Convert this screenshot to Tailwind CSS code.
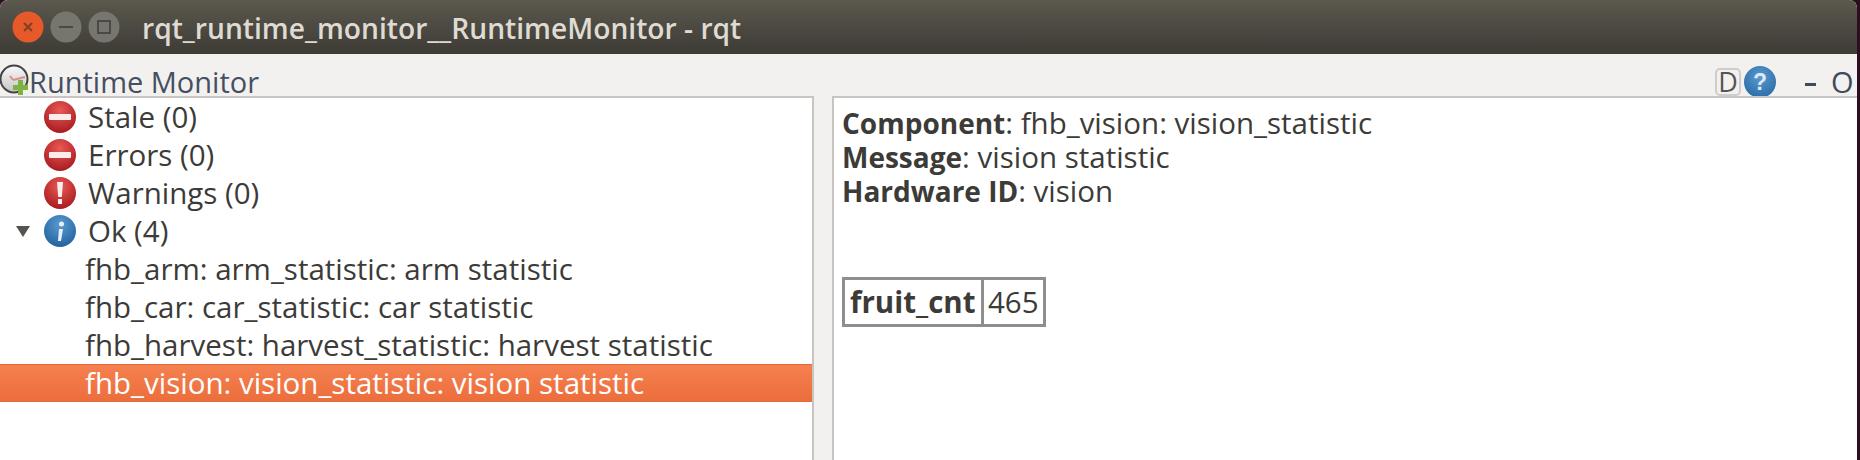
<!DOCTYPE html>
<html lang="en">
<head>
    <meta charset="UTF-8">
    <title>rqt_runtime_monitor__RuntimeMonitor - rqt</title>
    <script src="https://cdn.jsdelivr.net/npm/@tailwindcss/browser@4"></script>
</head>
<body class="bg-[#2c0e20] w-[1860px] h-[460px] overflow-hidden font-['Open_Sans','Noto_Sans',sans-serif] text-[#3c3b37]">
    <div class="w-[1857px] h-[460px] flex flex-col bg-[#f2f1f0] rounded-t-[8px] overflow-hidden">
        <!-- Title bar -->
        <div class="h-[54px] flex items-center bg-gradient-to-b from-[#5b584e] to-[#3d3b35]">
            <div class="flex items-center gap-[6px] pl-[12px]">
                <svg width="32" height="32" viewBox="0 0 32 32">
                    <circle cx="16" cy="16" r="15.5" fill="#e8592a"/>
                    <path d="M12 12l8 8M20 12l-8 8" stroke="#7d4128" stroke-width="2"/>
                </svg>
                <svg width="32" height="32" viewBox="0 0 32 32">
                    <circle cx="16" cy="16" r="15.5" fill="#77766e"/>
                    <path d="M9 16h14" stroke="#4a4943" stroke-width="2"/>
                </svg>
                <svg width="32" height="32" viewBox="0 0 32 32">
                    <circle cx="16" cy="16" r="15.5" fill="#77766e"/>
                    <rect x="10" y="10" width="12" height="12" fill="none" stroke="#4a4943" stroke-width="2"/>
                </svg>
            </div>
            <div class="ml-[22px] pt-[3px] text-[28.2px] font-semibold text-[#dfdbd2] whitespace-nowrap">rqt_runtime_monitor__RuntimeMonitor - rqt</div>
        </div>

        <!-- Plugin toolbar -->
        <div class="h-[42px] flex items-center pt-[13px] text-[29px] leading-none">
            <svg width="29" height="34" viewBox="0 0 29 34" class="-mt-[2px] shrink-0">
                <defs>
                    <linearGradient id="clockGrad" x1="0" y1="0" x2="0" y2="1">
                        <stop offset="0" stop-color="#fafafa"/>
                        <stop offset="1" stop-color="#c4c4c4"/>
                    </linearGradient>
                </defs>
                <circle cx="14" cy="15" r="13.5" fill="url(#clockGrad)" stroke="#444" stroke-width="2"/>
                <path d="M13 16l12-3M13 16l-3-4" stroke="#d9908c" stroke-width="2"/>
                <rect x="18" y="16" width="5" height="15" fill="#7cb342"/>
                <rect x="13" y="21" width="15" height="5" fill="#7cb342"/>
            </svg>
            <span class="text-[#44505f] whitespace-nowrap">Runtime Monitor</span>
            <div class="ml-auto flex items-center">
                <div class="w-[26px] h-[28px] border-2 border-[#cfcdc9] rounded-[5px] flex items-center justify-center text-[27px] text-[#555]">D</div>
                <svg width="32" height="32" viewBox="0 0 32 32" class="ml-[3px]">
                    <defs>
                        <radialGradient id="helpGrad" cx="50%" cy="35%" r="70%">
                            <stop offset="0" stop-color="#5a9ad0"/>
                            <stop offset="1" stop-color="#2a6aa5"/>
                        </radialGradient>
                    </defs>
                    <circle cx="16" cy="16" r="16" fill="url(#helpGrad)"/>
                    <text x="16" y="24" text-anchor="middle" font-size="23" font-weight="700" fill="#dce9f5" font-family="Liberation Sans">?</text>
                </svg>
                <div class="ml-[29px] mt-[6px] w-[11px] h-[3px] bg-[#3f4a5a]"></div>
                <div class="ml-[15px] mr-[4px] w-[22px] text-[29px] text-[#3f4a5a]">O</div>
            </div>
        </div>

        <!-- Panes -->
        <div class="flex-1 flex">
            <!-- Tree -->
            <div class="w-[814px] bg-white border-t-2 border-r-2 border-[#c8c5c1] text-[29.5px]">
                <div class="h-[38px] flex items-center pl-[44px]">
                    <svg width="32" height="32" viewBox="0 0 32 32" class="shrink-0">
                        <defs>
                            <radialGradient id="redGrad" cx="50%" cy="30%" r="75%">
                                <stop offset="0" stop-color="#ea5a55"/>
                                <stop offset="1" stop-color="#a3161c"/>
                            </radialGradient>
                            <radialGradient id="blueGrad" cx="50%" cy="30%" r="75%">
                                <stop offset="0" stop-color="#5a9ad0"/>
                                <stop offset="1" stop-color="#1f5f9c"/>
                            </radialGradient>
                        </defs>
                        <circle cx="16" cy="16" r="16" fill="url(#redGrad)"/>
                        <rect x="5" y="13" width="22" height="6" rx="1" fill="#f7eeee"/>
                    </svg>
                    <span class="ml-[12px]">Stale (0)</span>
                </div>
                <div class="h-[38px] flex items-center pl-[44px]">
                    <svg width="32" height="32" viewBox="0 0 32 32" class="shrink-0">
                        <circle cx="16" cy="16" r="16" fill="url(#redGrad)"/>
                        <rect x="5" y="13" width="22" height="6" rx="1" fill="#f7eeee"/>
                    </svg>
                    <span class="ml-[12px]">Errors (0)</span>
                </div>
                <div class="h-[38px] flex items-center pl-[44px]">
                    <svg width="32" height="32" viewBox="0 0 32 32" class="shrink-0">
                        <circle cx="16" cy="16" r="16" fill="url(#redGrad)"/>
                        <path d="M13 5h6l-1.2 15h-3.6z" fill="#f7eeee"/>
                        <rect x="14" y="22" width="4" height="5" fill="#f7eeee"/>
                    </svg>
                    <span class="ml-[12px]">Warnings (0)</span>
                </div>
                <div class="h-[38px] flex items-center pl-[16px]">
                    <svg width="14" height="11" viewBox="0 0 14 11" class="shrink-0">
                        <path d="M0 0h14l-7 11z" fill="#55544f"/>
                    </svg>
                    <svg width="32" height="32" viewBox="0 0 32 32" class="shrink-0 ml-[14px]">
                        <circle cx="16" cy="16" r="16" fill="url(#blueGrad)"/>
                        <path d="M15 14h4l-2 12h-3z" fill="#e8f0f7"/>
                        <circle cx="17.5" cy="9" r="2.5" fill="#e8f0f7"/>
                    </svg>
                    <span class="ml-[12px]">Ok (4)</span>
                </div>
                <div class="h-[38px] flex items-center pl-[85px]">fhb_arm: arm_statistic: arm statistic</div>
                <div class="h-[38px] flex items-center pl-[85px]">fhb_car: car_statistic: car statistic</div>
                <div class="h-[38px] flex items-center pl-[85px]">fhb_harvest: harvest_statistic: harvest statistic</div>
                <div class="h-[38px] flex items-center pl-[85px] bg-gradient-to-b from-[#f5804f] to-[#ec6d3c] border-t border-[#e36a3a] text-white">fhb_vision: vision_statistic: vision statistic</div>
            </div>

            <div class="w-[18px]"></div>

            <!-- Details -->
            <div class="flex-1 bg-white border-t-2 border-l-2 border-[#c8c5c1] pl-[8px] pt-[8px] text-[29.5px]">
                <div class="leading-[34px]"><b class="text-[28px]">Component</b>: fhb_vision: vision_statistic</div>
                <div class="leading-[34px]"><b class="text-[28px]">Message</b>: vision statistic</div>
                <div class="leading-[34px]"><b class="text-[28px]">Hardware ID</b>: vision</div>
                <div class="mt-[69px] w-[204px] h-[50px] border-3 border-[#8e8e8e] flex">
                    <div class="w-[139px] border-r-3 border-[#8e8e8e] flex items-center pl-[5px] font-bold whitespace-nowrap">fruit_cnt</div>
                    <div class="flex-1 flex items-center pl-[4px]">465</div>
                </div>
            </div>
        </div>
    </div>
</body>
</html>
